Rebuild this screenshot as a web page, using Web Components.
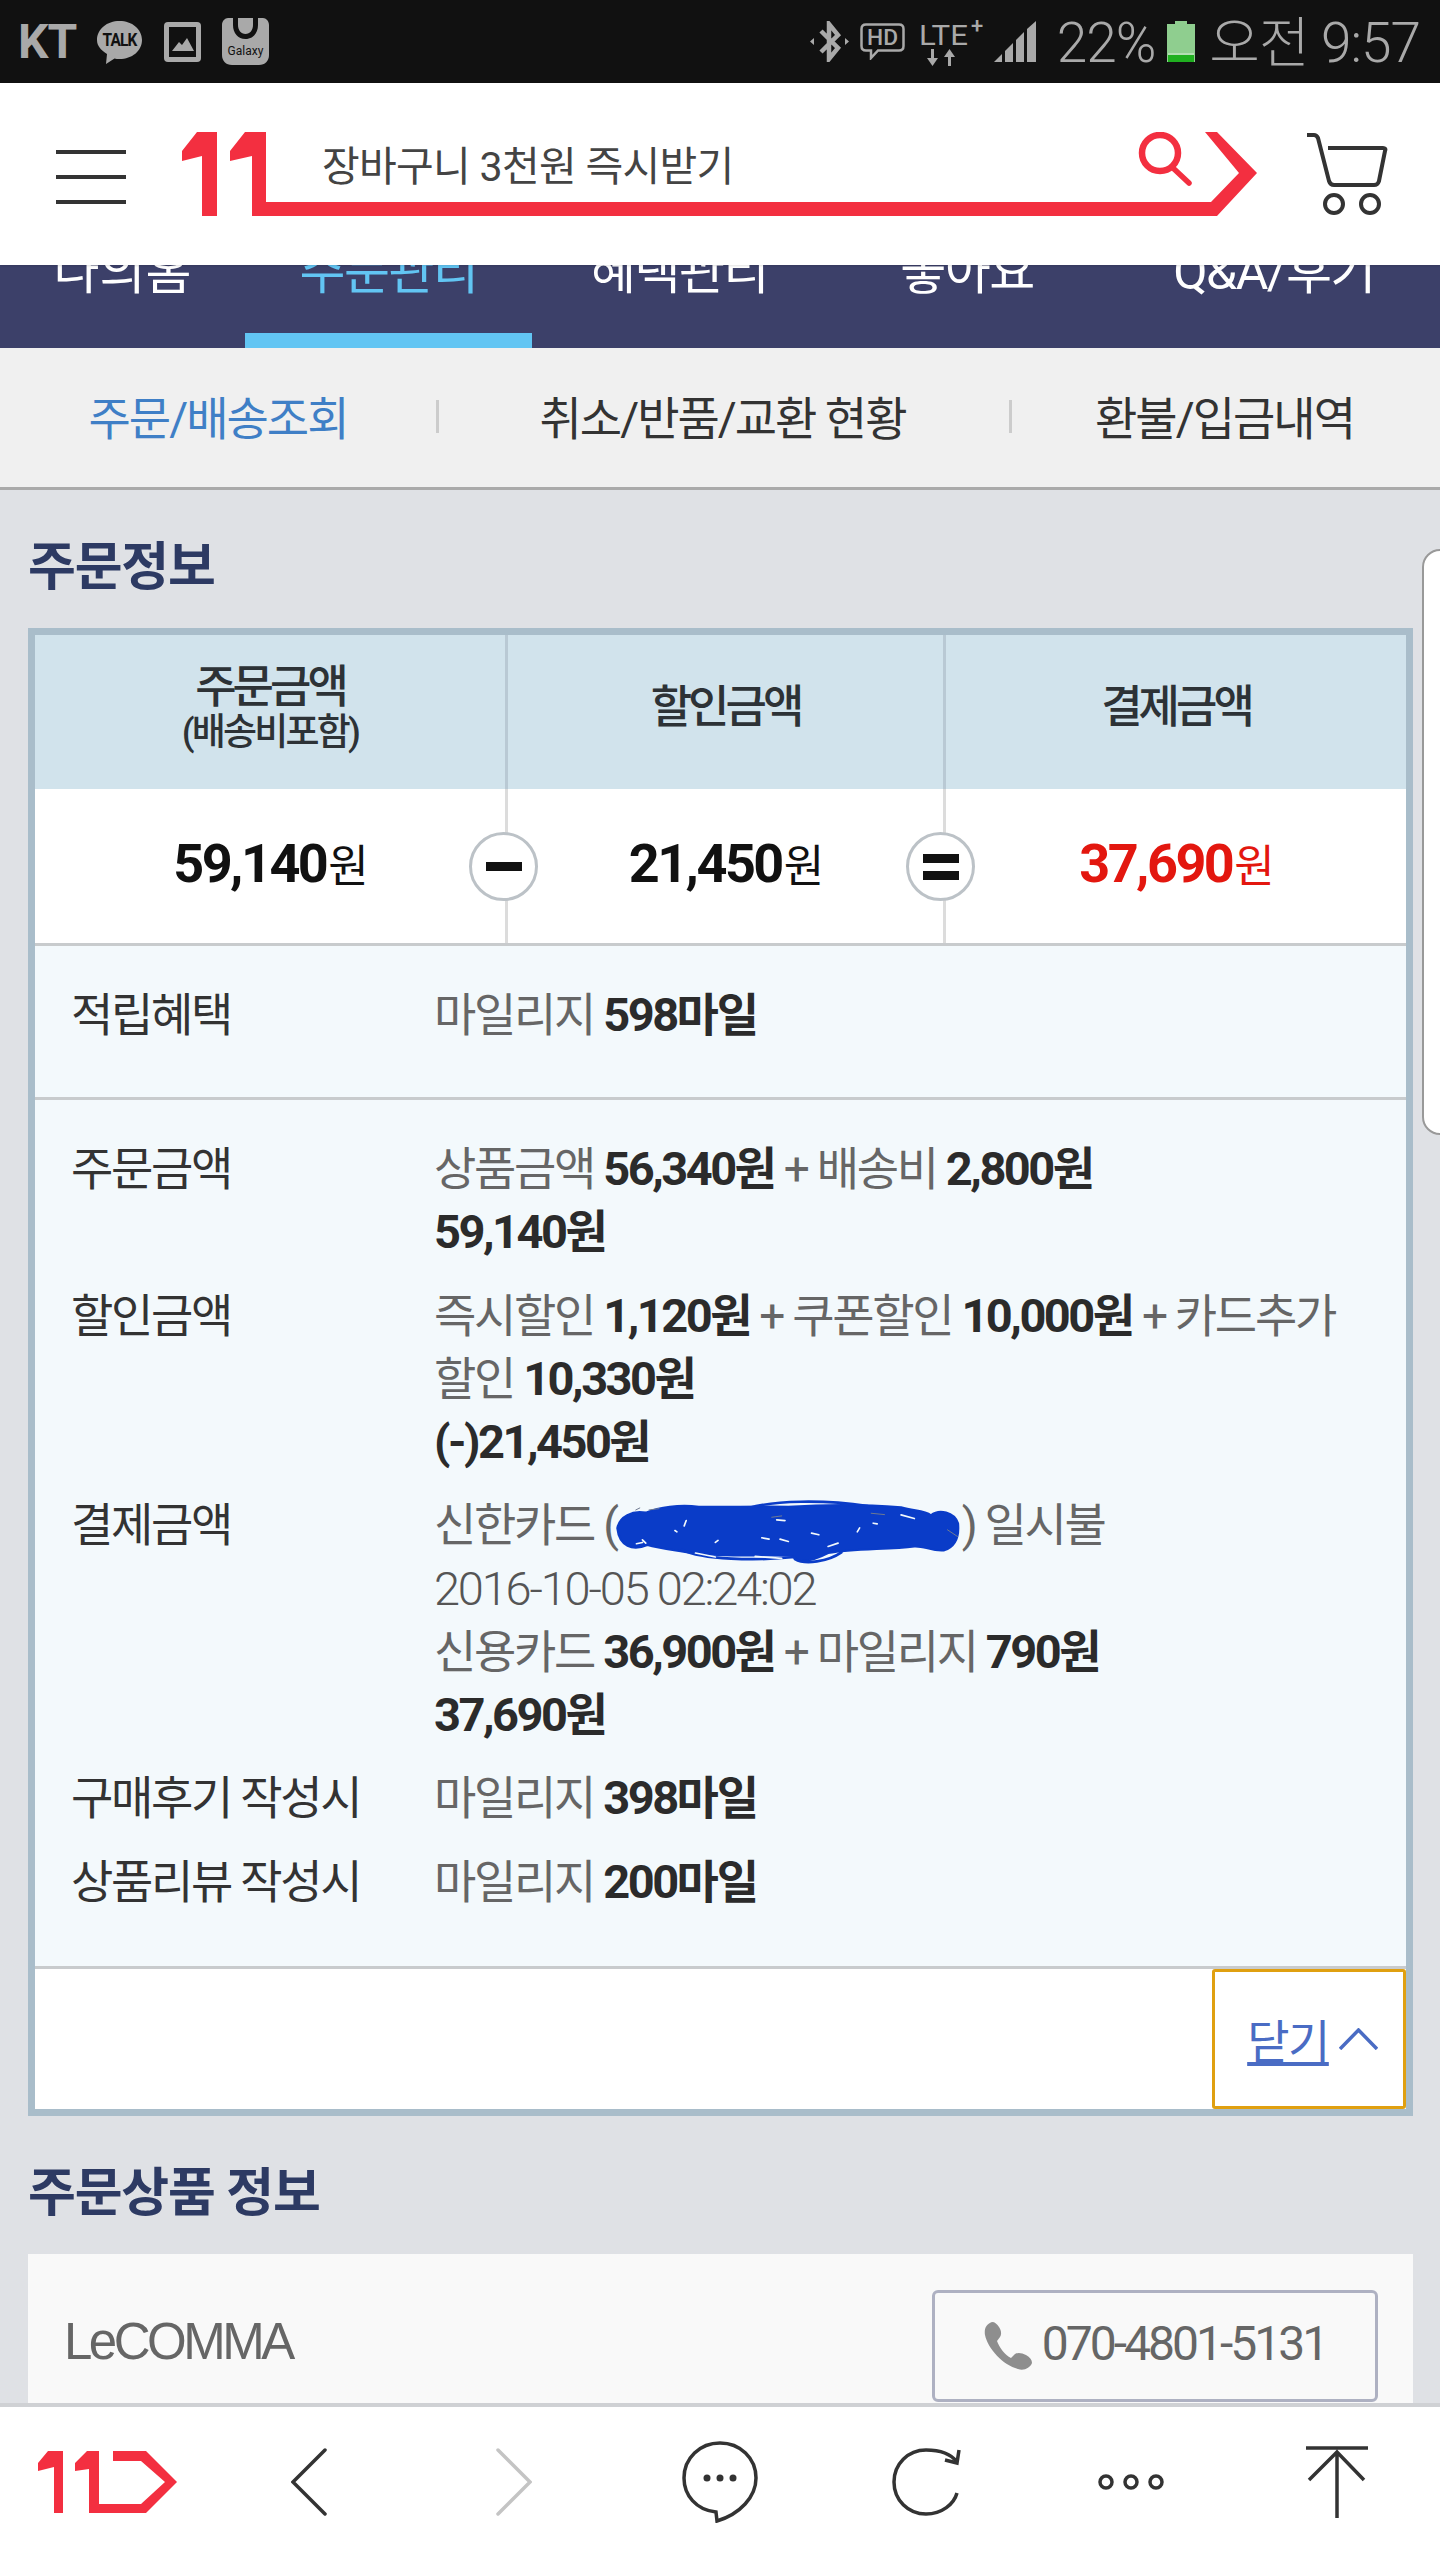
<!DOCTYPE html>
<html lang="ko">
<head>
<meta charset="utf-8">
<title>주문정보</title>
<style>
  html, body { margin: 0; height: 2560px; overflow: hidden; }
  body {
    width: 1440px;
    display: flex;
    flex-direction: column;
    position: relative;
    font-family: Roboto, "Noto Sans CJK KR", sans-serif;
    background: #dfe1e5;
  }
</style>
</head>
<body>
<status-bar></status-bar>
<site-header></site-header>
<nav-tabs></nav-tabs>
<sub-tabs></sub-tabs>
<page-main>
  <section-title>주문정보</section-title>
  <order-box>
    <detail-group slot="mile">
      <detail-row label="적립혜택">마일리지 <amt-text unit="마일">598</amt-text></detail-row>
    </detail-group>
    <detail-group slot="detail">
      <detail-row label="주문금액">상품금액 <amt-text unit="원">56,340</amt-text> + 배송비 <amt-text unit="원">2,800</amt-text><br><amt-text unit="원">59,140</amt-text></detail-row>
      <detail-row label="할인금액">즉시할인 <amt-text unit="원">1,120</amt-text> + 쿠폰할인 <amt-text unit="원">10,000</amt-text> + 카드추가<br>할인 <amt-text unit="원">10,330</amt-text><br><amt-text unit="원">(-)21,450</amt-text></detail-row>
      <detail-row label="결제금액">신한카드 (<scribble-mark></scribble-mark>) 일시불<br><date-text>2016-10-05 02:24:02</date-text><br>신용카드 <amt-text unit="원">36,900</amt-text> + 마일리지 <amt-text unit="원">790</amt-text><br><amt-text unit="원">37,690</amt-text></detail-row>
      <detail-row label="구매후기 작성시">마일리지 <amt-text unit="마일">398</amt-text></detail-row>
      <detail-row label="상품리뷰 작성시">마일리지 <amt-text unit="마일">200</amt-text></detail-row>
    </detail-group>
  </order-box>
  <section-title>주문상품 정보</section-title>
  <seller-card name="LeCOMMA" phone="070-4801-5131"></seller-card>
</page-main>
<bottom-toolbar></bottom-toolbar>
<edge-handle></edge-handle>

<script>
function define(name, css, html) {
  customElements.define(name, class extends HTMLElement {
    constructor() {
      super();
      this.attachShadow({ mode: 'open' });
      this.shadowRoot.innerHTML = `<style>${css}</style>${typeof html === 'function' ? html(this) : html}`;
    }
  });
}

define('status-bar', `
  :host { display: flex; height: 83px; flex: none; background: #111; color: #a9a9a9; align-items: center; justify-content: space-between; padding: 0 20px 0 18px; box-sizing: border-box; }
  .group { display: flex; align-items: center; }
  .kt { font-weight: 700; font-size: 48px; letter-spacing: -1px; width: 58px; line-height: 1; }
  .txt { font-size: 55px; font-weight: 300; letter-spacing: -1px; line-height: 1; white-space: nowrap; padding-top: 3px; }
  svg { display: block; }
`, `
  <div class="group">
    <span class="kt">KT</span>
    <svg style="margin-left:20px" width="47" height="46" viewBox="0 0 47 46">
      <path d="M23.5 2C36 2 46 10 46 21S36 40 23.5 40c-2 0-3.5 0-5-.5L10 45l1-10C5 31 1 27 1 21 1 10 11 2 23.5 2Z" fill="#a9a9a9"/>
      <text x="23.5" y="27" text-anchor="middle" font-family="Roboto" font-weight="700" font-size="18" letter-spacing="-1" textLength="34" lengthAdjust="spacingAndGlyphs" fill="#111">TALK</text>
    </svg>
    <svg style="margin-left:21px" width="37" height="40" viewBox="0 0 37 40">
      <rect x="0" y="0" width="37" height="40" rx="4" fill="#a9a9a9"/>
      <rect x="5" y="5" width="27" height="30" fill="#111"/>
      <path d="M8 29 15 20 18 23 23 16 30 29Z" fill="#a9a9a9"/>
    </svg>
    <svg style="margin-left:21px" width="47" height="47" viewBox="0 0 47 47">
      <path d="M6 0h6v6c0 8 5 14 11.500 14S35 14 35 6V0h6c3 0 6 3 6 7v30c0 6-4 10-10 10H10C4 47 0 43 0 37V7c0-4 3-7 6-7Z" fill="#a9a9a9"/>
      <path d="M12 0h23v6c0 8-5 14-11.500 14S12 14 12 6Z" fill="#a9a9a9"/>
      <path d="M11 0v7c0 8 5 14 12.500 14S36 15 36 7V0h-5v7c0 5-3 9-7.500 9S16 12 16 7V0Z" fill="#111"/>
      <text x="23.500" y="37" text-anchor="middle" font-family="Roboto" font-size="12" fill="#111">Galaxy</text>
    </svg>
  </div>
  <div class="group">
    <svg width="39" height="41" viewBox="0 0 39 41" fill="none" stroke="#a9a9a9">
      <path d="M11 10 28 27 19 38V3l9 11L11 31" stroke-width="4.500"/>
      <path d="M0 20.500 4 17v7ZM39 20.500 35 17v7Z" fill="#a9a9a9" stroke="none"/>
    </svg>
    <svg style="margin-left:11px" width="45" height="37" viewBox="0 0 45 37" fill="none">
      <path d="M6 1.500h33c3 0 4.500 1.500 4.500 4.500v17c0 3-1.500 4.500-4.500 4.500H18L11 35v-7.500H6c-3 0-4.500-1.500-4.500-4.500V6c0-3 1.500-4.500 4.500-4.500Z" stroke="#a9a9a9" stroke-width="2.500"/>
      <text x="22.500" y="22" text-anchor="middle" font-family="Roboto" font-size="22" font-weight="500" textLength="31" lengthAdjust="spacingAndGlyphs" fill="#a9a9a9">HD</text>
    </svg>
    <svg style="margin-left:14px" width="67" height="48" viewBox="0 0 67 48">
      <text x="0" y="27" font-family="Roboto" font-size="27" textLength="49" lengthAdjust="spacingAndGlyphs" fill="#a9a9a9">LTE</text>
      <text x="52" y="15" font-family="Roboto" font-size="22" font-weight="500" fill="#a9a9a9">+</text>
      <path d="M12 31h3v9h4l-5.500 8L8 40h4ZM29 48h3v-9h4l-5.500-8L25 39h4Z" fill="#a9a9a9"/>
    </svg>
    <svg style="margin-left:8px" width="42" height="41" viewBox="0 0 42 41" fill="#a9a9a9">
      <path d="M0 41 8 33V41ZM11 30 19 22V41H11ZM22 19 30 11V41H22ZM33 8 42 0V41H33Z"/>
    </svg>
    <span class="txt" style="margin-left:21px">22%</span>
    <svg style="margin-left:12px" width="28" height="41" viewBox="0 0 28 41">
      <path d="M8 0h12v3h8v38H0V3h8Z" fill="#8fce8f"/>
      <rect x="1" y="34" width="26" height="7" fill="#20b020"/>
      <rect x="1" y="32.500" width="26" height="1" fill="#d7eed7"/>
    </svg>
    <span class="txt" style="margin-left:14px">오전 9:57</span>
  </div>
`);

define('site-header', `
  :host { display: flex; flex: none; height: 182px; background: #fff; align-items: center; padding-left: 56px; box-sizing: border-box; position: relative; z-index: 2; box-shadow: 0 1px 2px rgba(0,0,0,.12); }
  .burger { width: 70px; display: flex; flex-direction: column; gap: 21px; margin: 6px 56px 0 0; }
  .burger i { display: block; height: 4px; background: #333; }
  .search { position: relative; width: 1075px; height: 84px; flex: none; box-sizing: border-box; padding-left: 140px; font-size: 41px; letter-spacing: -.700px; color: #444; line-height: 71px; white-space: nowrap; }
  .search svg { position: absolute; left: 0; top: 0; }
  .cart { margin-left: 49px; display: block; }
`, `
  <div class="burger"><i></i><i></i><i></i></div>
  <div class="search">
    <span>장바구니 3천원 즉시받기</span>
    <svg width="1075" height="84" viewBox="0 0 1075 84">
      <path fill="#f32f40" d="M0 19 15 0H35V84H20V24L0 29ZM48 19 63 0H84V70H1029L1057 41 1023 0H1035L1075 41 1035 84H70V24L48 29Z"/>
      <circle cx="978" cy="21" r="18" fill="none" stroke="#f32f40" stroke-width="6.500"/>
      <path d="M991 36 1007 51" stroke="#f32f40" stroke-width="5.500" stroke-linecap="round"/>
    </svg>
  </div>
  <svg class="cart" width="82" height="84" viewBox="0 0 82 84" fill="none" stroke="#333" stroke-width="4">
    <path d="M1 3H8C10 3 11 4 12 6L23 49C24 52 26 53 28 53H68C71 53 72 52 73 49L79 19C80 17 79 16 77 16H22"/>
    <circle cx="28" cy="72" r="9"/><circle cx="64" cy="72" r="9"/>
  </svg>
`);

define('nav-tabs', `
  :host { display: grid; flex: none; grid-template-columns: 245px 287px 294px 282px 1fr; height: 83px; background: #3c4069; color: #fff; overflow: hidden; font-size: 50px; letter-spacing: -1.500px; }
  div { position: relative; text-align: center; white-space: nowrap; }
  span { position: absolute; left: 0; right: 0; bottom: 46px; line-height: 60px; }
  .on { color: #62c5f3; border-bottom: 15px solid #62c5f3; box-sizing: border-box; }
  .on span { bottom: 31px; }
  .wide { letter-spacing: 0; }
`, `
  <div class="wide"><span>나의홈</span></div>
  <div class="on"><span>주문관리</span></div>
  <div><span>혜택관리</span></div>
  <div><span>좋아요</span></div>
  <div><span>Q&amp;A/후기</span></div>
`);

define('sub-tabs', `
  :host { display: grid; flex: none; grid-template-columns: 436px 573px 1fr; height: 142px; background: #f0f0f0; border-bottom: 3px solid #aaa; box-sizing: border-box; font-size: 46px; letter-spacing: -2px; color: #333; }
  div { display: flex; align-items: center; justify-content: center; position: relative; white-space: nowrap; padding-bottom: 5px; }
  div + div::before { content: ""; position: absolute; left: 0; top: 52px; height: 33px; width: 3px; background: #ccc; }
  .on { color: #3f7fc6; }
`, `
  <div class="on">주문/배송조회</div>
  <div>취소/반품/교환 현황</div>
  <div>환불/입금내역</div>
`);

define('page-main', `
  :host { display: block; flex: 1; min-height: 0; overflow: hidden; padding: 0 27px 0 28px; }
`, `<slot></slot>`);

define('section-title', `
  :host { display: block; padding: 43px 0 25px; font-size: 52px; line-height: 70px; font-weight: 700; letter-spacing: -1.200px; color: #2d3a63; white-space: nowrap; }
`, `<slot></slot>`);

define('order-box', `
  :host { display: block; border: 7px solid #a9bdca; background: #fff; }
  .grid { display: grid; grid-template-columns: 470px 438px 1fr; position: relative; }
  .head { height: 154px; box-sizing: border-box; padding-bottom: 8px; background: #d1e3ec; display: flex; flex-direction: column; align-items: center; justify-content: center; font-size: 45px; line-height: 50px; font-weight: 500; letter-spacing: -4px; color: #2d3236; white-space: nowrap; }
  .head small { font-size: 37px; line-height: 40px; letter-spacing: -2.800px; font-weight: 500; }
  .head + .head { border-left: 3px solid #b9c9d4; }
  .val { height: 154px; box-sizing: border-box; padding-bottom: 6px; display: flex; align-items: center; justify-content: center; font-size: 54px; font-weight: 700; letter-spacing: -2.500px; color: #111; }
  .val + .val { border-left: 3px solid #dcdcdc; }
  .val span { font-size: 44px; font-weight: 400; letter-spacing: -2px; margin-left: 2px; }
  .red { color: #e3170f; }
  .sign { position: absolute; top: 197px; width: 69px; height: 69px; box-sizing: border-box; border: 3px solid #bcc2c7; border-radius: 50%; background: #fff; display: flex; flex-direction: column; align-items: center; justify-content: center; gap: 8px; }
  .sign i { display: block; width: 36px; height: 9px; background: #111; }
  .close { display: flex; justify-content: flex-end; border-top: 3px solid #c8cbcd; background: #fff; }
  .btn { box-sizing: border-box; width: 194px; height: 140px; padding: 0 0 0 7px; border: 3px solid #e0a010; border-radius: 3px; display: flex; align-items: center; justify-content: center; gap: 10px; font-size: 46px; letter-spacing: -1.500px; color: #4a6cc4; }
  .btn u { text-underline-offset: 4px; margin-top: -2px; }
`, `
  <div class="grid">
    <div class="head"><span>주문금액</span><small>(배송비포함)</small></div>
    <div class="head">할인금액</div>
    <div class="head">결제금액</div>
    <div class="val">59,140<span>원</span></div>
    <div class="val">21,450<span>원</span></div>
    <div class="val red">37,690<span>원</span></div>
    <div class="sign" style="left:434px"><i></i></div>
    <div class="sign" style="left:871px"><i></i><i></i></div>
  </div>
  <slot name="mile"></slot>
  <slot name="detail"></slot>
  <div class="close"><div class="btn"><u>닫기</u>
    <svg width="39" height="22" viewBox="0 0 39 22" fill="none" stroke="#4a6cc4" stroke-width="3.500"><path d="M1 21 19.500 2 38 21"/></svg>
  </div></div>
`);

define('detail-group', `
  :host { display: flex; flex-direction: column; gap: 20px; background: #f3f9fc; border-top: 3px solid #c8cbcd; box-sizing: border-box; padding: 38px 0 52px 36px; }
  :host([slot="mile"]) { height: 154px; }
`, `<slot></slot>`);

define('detail-row', `
  :host { display: grid; grid-template-columns: 363px 1fr; font-size: 46px; line-height: 63.250px; letter-spacing: -2.300px; color: #666; white-space: nowrap; }
  .label { color: #333; }
`, el => `<div class="label">${el.getAttribute('label')}</div><div><slot></slot></div>`);

define('amt-text', `
  :host { font-size: 47px; line-height: 1; font-weight: 700; letter-spacing: -2.500px; color: #2b2b2b; }
  span { font-size: 46px; line-height: 1; letter-spacing: -2.300px; }
`, el => `<slot></slot><span>${el.getAttribute('unit') || ''}</span>`);

define('date-text', `
  :host { font-size: 47px; line-height: 1; letter-spacing: -2.200px; font-weight: 300; color: #555; }
`, `<slot></slot>`);

define('scribble-mark', `
  :host { display: inline-block; width: 345px; height: 30px; vertical-align: -4px; margin: 0 2px 0 -2px; }
  svg { display: block; overflow: visible; margin-top: -15px; }
`, `
  <svg width="345" height="63" viewBox="0 0 1035 190" fill="none" stroke="#0a3cc8" stroke-linecap="round" stroke-linejoin="round">
    <path fill="#0a3cc8" stroke-width="6" d="M4 85C10 50 50 30 90 38 130 22 190 12 250 20 330 22 420 18 520 20 620 14 740 12 860 22 900 34 930 30 950 46 975 26 1020 36 1032 70 1036 110 1026 140 990 152 955 156 930 138 900 140 820 150 720 146 640 160 590 186 550 190 530 168 430 166 320 172 230 160 170 150 130 146 95 136 50 155 10 140 4 85Z"/>
    <path stroke-width="8" d="M400 24C480 2 620 -2 760 18M200 150C260 180 420 184 540 172M540 178C570 196 640 186 680 158"/>
    <path stroke="#f3f9fc" stroke-width="5" d="M485 60 510 62M178 92 184 96M212 62 206 78M300 128 308 122M440 114 462 118M495 118 520 125M590 100 612 105M640 140 670 130M735 84 728 96M776 70 788 72M860 45 900 56M80 120 90 130M80 128 62 132M240 160 300 172M420 170 500 176"/>
    <path stroke="#6f7a90" stroke-width="3" d="M60 30 72 24M100 30 130 26M470 52 500 48M770 40 810 44M1000 90 1030 110"/>
  </svg>
`);

define('seller-card', `
  :host { display: flex; height: 160px; box-sizing: border-box; background: #f9f9f9; justify-content: space-between; padding: 36px 35px 0 36px; }
  .name { font-family: "Liberation Sans", sans-serif; font-size: 51px; letter-spacing: -3.500px; color: #666; line-height: 104px; }
  .btn { box-sizing: border-box; width: 446px; height: 112px; border: 3px solid #aeb1c2; border-radius: 6px; display: flex; align-items: center; justify-content: center; gap: 10px; font-size: 48px; letter-spacing: -3px; color: #666; white-space: nowrap; }
  .btn span { line-height: 104px; padding-bottom: 4px; }
`, el => `
  <div class="name">${el.getAttribute('name')}</div>
  <div class="btn">
    <svg width="48" height="48" viewBox="0 0 48 48"><path fill="#8e8e8e" d="M8 0C2 2 0 7 1 13 4 27 19 43 34 47 40 49 46 46 48 41 48 38 46 35 42 33 38 31 34 30 31 32L27 36C21 33 15 25 13 19L16 15C18 12 17 8 15 5 13 2 11 0 8 0Z"/></svg>
    <span>${el.getAttribute('phone')}</span>
  </div>
`);

define('bottom-toolbar', `
  :host { display: grid; flex: none; height: 157px; grid-template-columns: repeat(7, 1fr); background: #fff; border-top: 4px solid #cfd1d4; box-sizing: border-box; padding-bottom: 3px; align-items: center; justify-items: center; position: relative; z-index: 2; }
  svg { display: block; }
`, `
  <svg width="139" height="62" viewBox="0 0 139 62" fill="#f32f40" style="margin-left:10px">
    <path d="M0 12 10 0H25V62H16V16L0 20ZM37 12 49 0H61V53H103L127 31 103 10H75V0H108L139 31 108 62H51V18L37 20Z"/>
  </svg>
  <svg width="36" height="68" viewBox="0 0 36 68" fill="none" stroke="#333" stroke-width="3.500" stroke-linecap="round"><path d="M34 2 2 34 34 66"/></svg>
  <svg width="36" height="68" viewBox="0 0 36 68" fill="none" stroke="#c4c4c4" stroke-width="3.500" stroke-linecap="round"><path d="M2 2 34 34 2 66"/></svg>
  <svg width="76" height="82" viewBox="0 0 76 82" fill="none" stroke="#333" stroke-width="3.500">
    <path d="M34 71C14 69 2 54 2 37 2 17 18 2 38 2S74 17 74 37C74 56 58 73 35 80Z"/>
    <g fill="#333" stroke="none"><circle cx="25" cy="37" r="3.500"/><circle cx="38" cy="37" r="3.500"/><circle cx="51" cy="37" r="3.500"/></g>
  </svg>
  <svg width="70" height="68" viewBox="0 0 70 68" fill="none" stroke="#333" stroke-width="3.500" style="margin-left:3px">
    <path d="M65 14C59 6 49 2 34 2 16 2 2 16 2 34S16 66 34 66C50 66 62 56 65 45"/>
    <path d="M53 12 65 15 67 2" />
  </svg>
  <svg width="66" height="30" viewBox="0 0 66 30" fill="none" stroke="#333" stroke-width="3.500">
    <circle cx="8" cy="15" r="6"/><circle cx="33" cy="15" r="6"/><circle cx="58" cy="15" r="6"/>
  </svg>
  <svg width="62" height="72" viewBox="0 0 62 72" fill="none" stroke="#333" stroke-width="3.500">
    <path d="M0 2H62M31 6V72M3 34 31 6 58 34"/>
  </svg>
`);

define('edge-handle', `
  :host { position: absolute; right: -4px; top: 549px; width: 22px; height: 586px; box-sizing: border-box; background: #fff; border: 2px solid #999; border-radius: 18px 0 0 18px; z-index: 1; }
`, ``);
</script>
</body>
</html>
